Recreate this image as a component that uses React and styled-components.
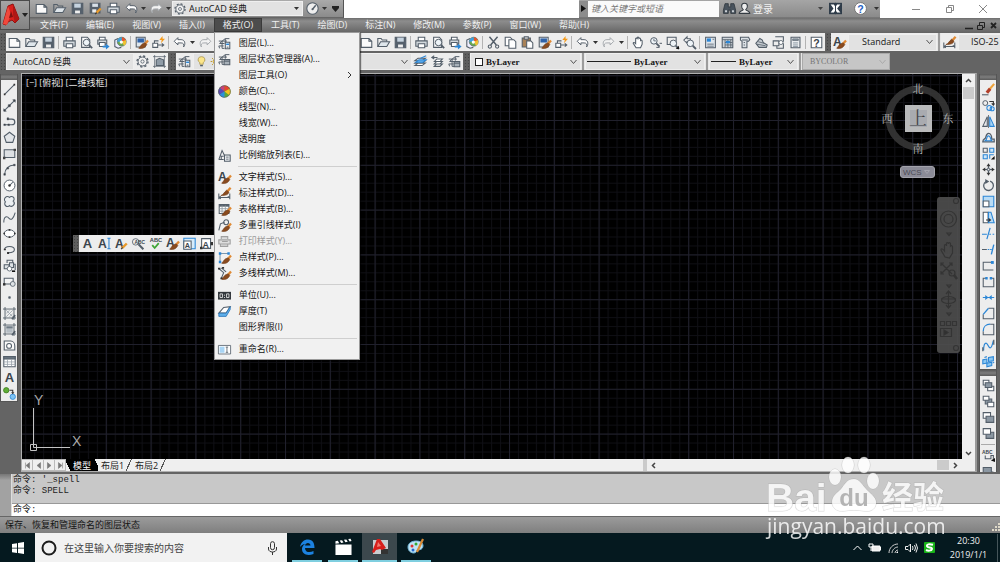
import React from "react";
import styled, { createGlobalStyle, css } from "styled-components";

const GlobalStyle = createGlobalStyle`
  * { box-sizing: border-box; }
  body { margin: 0; background: #646464; overflow: hidden; }
  body, button, input, select { font-family: "Open Sans", "Noto Sans CJK SC", sans-serif; font-size: 9px; line-height: 12px; }
  button { border: 0; padding: 0; margin: 0; background: none; color: inherit; }
  svg { display: block; flex: none; overflow: visible; }
`;

const INK = "#535e69";
const BLUE = "#2b86d6";

/* ---------- icon drawings, 16 x 16 ---------- */

const P = ({ d, s = INK, f = "none", w = 1.3 }) => <path d={d} stroke={s} fill={f} strokeWidth={w} />;
const Letter = ({ x = 0, y = 13, size = 15, fill = "#3b444c", weight = 700, children }) => (
  <text x={x} y={y} fontSize={size} fontFamily="Liberation Sans, sans-serif" fontWeight={weight} fill={fill}>{children}</text>
);
const Brush = () => (
  <>
    <P d="M16 5.500L12 10" s="#e08a34" w={2.800} />
    <P d="M12.500 8.500l2 2c-2 4-5 5.500-10 4.500c2-1.500 2.500-4 5-5.500z" f="#8a4b1f" s="#6e3a17" w={0.800} />
  </>
);
const Pencil = () => <><P d="M14.500 8L9 13.500" s="#e79a2c" w={3} /><P d="M9.500 13L7.500 15" s="#333" w={1.500} /></>;
const Stack = () => (
  <P d="M5 5l4-3h5M2 8l3-3h6M1 5h4M2 8h6M1 11h6M2 14l-1-3M5 5v9h3M9 2v5" w={1.200} />
);
const Lens = ({ x = 6, y = 6 }) => <><circle cx={x} cy={y} r="4" fill="#eef4f8" stroke={INK} strokeWidth="1.2" /><P d={`M${x + 3} ${y + 3}l4 4`} w={2.200} /></>;

const drawings = {
  new: <P d="M1.500 3h9.500l3.500 3.500V14h-13zM11 3v3.500h3.500" f="#fafafa" />,
  open: <><P d="M1 13V3h4l1.500 2H12v2" /><P d="M1 13l3.500-6H15.500l-3.500 6z" f="#dfe6eb" /></>,
  save: <><P d="M1.500 1.500h13v13h-13z" f="#55606c" /><P d="M4 2h8v5H4z" f="#c6d3df" s="none" /><P d="M5 10.500h6V14H5z" f="#eee" s="none" /></>,
  saveas: <><P d="M1.500 1.500h12v12h-12z" f="#55606c" /><P d="M4 2h7v4H4z" f="#d8e0e8" s="none" /><P d="M4 9h5v4H4z" f="#eee" s="none" /><Pencil /></>,
  print: <><P d="M4 6V1.500h8V6" f="#fff" /><P d="M1 6h14v6.500H1z" f="#d2d8dd" /><P d="M4 9.500h8v5H4z" f="#fff" /></>,
  preview: <><P d="M2 14V1.500h7L12 5v9z" f="#fafafa" /><Lens x={8} y={8} /></>,
  publish: <><P d="M3 5V1.500h7V5" f="#fff" /><P d="M1 5h11v5H1z" f="#d2d8dd" /><P d="M3 8h7v5H3z" f="#fff" /><P d="M7 12h4v-2.500l4.500 3.500-4.500 3.500V14H7z" f={BLUE} s="none" /></>,
  sphere: <><P d="M5 3L1 5v8l4 2 4-1" f="#eef" /><circle cx="9.500" cy="7" r="5.500" fill="#6aa84f" stroke={INK} strokeWidth=".8" /><P d="M9.500 7V1.500a5.500 5.500 0 0 1 5 4z" f="#e6542e" s="none" /><P d="M9.500 7l5-2a6 6 0 0 1-2 7z" f="#f2c230" s="none" /><P d="M9.500 7L4 7a6 6 0 0 1 5.500-5.500z" f="#3f9fe0" s="none" /><circle cx="9" cy="7.500" r="2" fill="#fff" /></>,
  match: <><P d="M1.500 1.500h11v12h-11z" f="#dfe6ec" /><P d="M3 3h8v5H3z" f="#2f62a8" s="none" /><Brush /></>,
  block: <><P d="M1 9h6v5H1zM3 9V6h5" f="#fff" /><P d="M7 11h7M12 9l2.500 2L12 13" /><P d="M13 0L9 5h3l-1 4 5-5.500h-3z" f="#f49a1a" s="none" /></>,
  undo: <P d="M6 2L1.500 6.500 6 11V8.500h4c3 0 4 2 3 5 3-4 1.500-9-3-9H6z" f="#fff" w={1.200} />,
  redo: <P d="M10 2l4.500 4.500L10 11V8.500H6c-3 0-4 2-3 5-3-4-1.500-9 3-9h4z" f="#f3f3f3" s="#a3a8ac" w={1.200} />,
  cut: <><P d="M3 1l8.500 10M13 1L4.500 11" w={1.800} /><circle cx="3.500" cy="13" r="2" fill="none" stroke={INK} strokeWidth="1.3" /><circle cx="12.500" cy="13" r="2" fill="none" stroke={INK} strokeWidth="1.3" /></>,
  copy: <><P d="M1.500 1.500h6L10 4v8H1.500z" f="#fff" /><P d="M6 4.500h6l2.500 2.500v8H6z" f="#fff" /></>,
  paste: <><P d="M1.500 2.500h10v11h-10z" f="#a98257" /><P d="M4 1h5v3H4z" f="#ccc" /><P d="M7 6h5l2.500 2.500V15H7z" f="#fff" /></>,
  pan: <P d="M5 14.500L1.500 9c0-1.500 1.500-1 3 .5V3c1-1 2 0 2 1V1.800c1-1 2 0 2 1V3c1-1 2 0 2 1v1.500c1-1 2 0 2 1V10l-2 4.500z" f="#fff" />,
  zoomrt: <><Lens x={6} y={6} /><P d="M6 3.500V6h2.500" w={1} /><P d="M9 14h4M13 9h3" w={1.200} /></>,
  zoomwin: <><P d="M1.500 1.500h11v9h-11z" /><Lens x={9} y={9} /><P d="M16 12v4h-4z" f="#111" s="none" /></>,
  zoomprev: <><P d="M1 5l4-4v2.500h4v3H5V9z" f="#fff" /><Lens x={9} y={9} /></>,
  palette: <><P d="M2 1.500h12v13H2z" f="#dfe6ec" /><P d="M3.500 3h5v4h-5z" f={BLUE} s="none" /><P d="M4 10h8M4 12.500h8M10.500 4h2" w={1} /></>,
  center: <><P d="M1.500 1.500h13v13h-13z" f="#cfd5da" /><P d="M1.500 4.500h13M5 4.500v10M8.500 4.500v10M12 4.500v10M5 8h9M5 11h9" w={1} /><P d="M6 6h5v3H6z" f={BLUE} s="none" /></>,
  toolpal: <><P d="M3 1.500h10l1.500 3-1.500 2-2 0v8H5v-8L3 5z" f="#dce1e5" /><P d="M5 5h7M7 8h1.500M7 11h1.500" /></>,
  sheets: <><P d="M1 9l5-6 3 2 1 3 5 3-1 3-9 0z" f="#c8ced3" /><P d="M2 10l11 2M4 7l7 2" w={1} /></>,
  markup: <><P d="M4 1h10v6M1.500 6h7v6h-7zM6 12v3h8V9" /><circle cx="11" cy="8" r="2.500" fill="#fff" stroke={INK} /></>,
  calc: <><P d="M2.500 1.500h11v13h-11z" f="#e8ebee" /><P d="M4.500 3.500h7v2h-7z" f="#8c98a3" w={0.800} /><P d="M5 8.500h6M5 11h6M5 13h6" s="#8c98a3" w={1.200} /></>,
  help: <><P d="M1.500 1.500h13v13h-13z" f="#fff" /><Letter x={4} y={13} size={13}>?</Letter></>,
  gear: <><circle cx="8" cy="8" r="5.500" fill="#f2f2f2" stroke={INK} strokeWidth="1.2" /><circle cx="8" cy="8" r="6.800" fill="none" stroke={INK} strokeWidth="1.6" strokeDasharray="2.670" /><circle cx="8" cy="8" r="2" fill="none" stroke={INK} /></>,
  custom: <><P d="M2 0v16M0 2h16M14 0v16M0 14h16" w={0.900} /><P d="M4 6l4-2 5 2v7H4z" f="#8f9ba6" /></>,
  gauge: <><circle cx="8" cy="8" r="7" fill="#eee" stroke={INK} strokeWidth="1.3" /><P d="M8 9l4-5" w={1.800} /><circle cx="8" cy="9" r="1.300" fill={INK} /></>,
  layers: <><Stack /><P d="M9 6.500h5.500v8H9z" f="#fff" /><P d="M10 8h3.500v2H10z" f={BLUE} s="none" /><P d="M10.500 12.500h2.500" /></>,
  layerstate: <><Stack /><P d="M7.500 8h7v6.500h-7z" f="#a8b1b9" /><P d="M7.500 10h7" /></>,
  layerblue: <><P d="M1 13l4-3h9l-4 3zM1 10l4-3h9l-4 3zM1 7l4-3h9l-4 3z" f="#fff" /><P d="M2 9l4-3h9l-4 3z" f="#66b2ef" s={BLUE} /><P d="M8 4l7-3" s={BLUE} /></>,
  layerprev: <><P d="M4 14l3-3h7l-3 3zM4 11l3-3h7l-3 3zM4 8l3-3h7l-3 3z" f="#fff" /><P d="M4 1L1 3l3 2M1 3h7" /></>,
  bulb: <><P d="M8 1a4.500 4.500 0 0 0-2.500 8.500V12h5V9.500A4.500 4.500 0 0 0 8 1z" f="#fbe58a" s="#a08a40" w={1} /><P d="M6 14h4" w={2} /></>,
  sun: <><circle cx="8" cy="8" r="3.500" fill="#fbd75e" stroke="#b78f1c" /><P d="M8 1v2M8 13v2M1 8h2M13 8h2M3 3l1.500 1.500M13 13l-1.500-1.500M13 3l-1.500 1.500M3 13l1.500-1.500" s="#b78f1c" /></>,
  abrush: <><Letter y={12} size={15}>A</Letter><Brush /></>,
  dimbrush: <><P d="M1 8v7M14.500 8v7M1 13h13.500M1 13l2.500-1.500M1 13l2.500 1.500M14.500 13L12 11.500" /><P d="M15.500 1L11 6" s="#e08a34" w={2.800} /><P d="M10.500 4l3 2.500c-1 3-4 4-10 4 3-1 4-4 7-6.500z" f="#8a4b1f" s="#6e3a17" w={0.800} /></>,
  wheel: <><circle cx="8" cy="8" r="7.500" fill="#58a83c" /><P d="M8 8L2 3.500A7.500 7.500 0 0 1 8 .5z" f="#c8407b" s="none" /><P d="M8 8V.5a7.500 7.500 0 0 1 6.500 4z" f="#e8452c" s="none" /><P d="M8 8l6.500-3.500a7.500 7.500 0 0 1-.5 8z" f="#f6c21d" s="none" /><P d="M8 8L2 3.500A7.500 7.500 0 0 0 1.500 12z" f="#5a48b8" s="none" /><P d="M8 8l-6.500 4A7.500 7.500 0 0 0 8 15.500z" f="#2b8fe0" s="none" /><circle cx="8" cy="8" r="7.200" fill="none" stroke="#5c5c5c" strokeWidth=".8" /></>,
  scale: <><P d="M1 13L5 2l3 6M1 13h6M4 13V9h3" /><P d="M8 7.500h7v7.500H8z" f="#e8ecef" /><P d="M10 10h3M10 12.500h3" w={1} /></>,
  tablebrush: <><P d="M1.500 2h12v11h-12z" f="#fff" /><P d="M1.500 3.500h12" w={2} /><P d="M1.500 7h12M1.500 10h11M5 3v10M9 3v10" s="#8d979f" w={1} /><Brush /></>,
  leaderbrush: <><P d="M1 14L3 6l5-2" /><circle cx="10" cy="4" r="3" fill="none" stroke={INK} strokeWidth="1.3" /><Brush /></>,
  plotstyle: <P d="M4 5V2h8v3M1 6h14v5H1zM3 11v3h9v-3M5 8h7" s="#a0a0a0" f="#ddd" />,
  pointbrush: <><P d="M2.500 3h10M2.500 3v10" s="#7c97ad" /><P d="M1 1.500h3v3H1zM11.500 1.500h3v3h-3zM1 12h3v3H1z" f={BLUE} s="none" /><Brush /></>,
  mlinebrush: <><P d="M1 2l6 5-3 7M4 1l6 5" /><P d="M0 1h3v2H0zM5 0h2.500v2H5zM3 13h3v2H3z" f="#333" s="none" /><Brush /></>,
  units: <><P d="M0 3.500h16v9.500H0z" f="#33383d" s="none" /><P d="M2.500 6h3v4.500h-3zM10.500 6h3v4.500h-3z" s="#eee" w={1} /><P d="M8 7v1M8 10v1" s="#fff" /></>,
  thick: <><P d="M1 10l6-7 8-1-5 8z" f="#fff" /><P d="M1 10l9 0 5-8v3.500l-5 8.500H1z" f="#5eb0ec" s="#2974b8" w={1} /></>,
  rename: <><P d="M.5 3h15v10.500H.5z" f="#fff" w={1} /><P d="M2 4.500h6V12H2z" f="#a9d5f5" s="none" /><P d="M9.500 5h3M11 5v6.500M9.500 11.500h3" w={1} /></>,
  line: <><P d="M2 14L14 2" /><P d="M1 13h2v2H1zM13 1h2v2h-2z" f="#333" s="none" /></>,
  xline: <><P d="M1 15L15 1" /><P d="M6.500 7h2.500v2.500H6.500zM12 1h3v3zM1 12v3h3z" f="#333" w={0.800} /></>,
  pline: <><P d="M2 12h9a3 3 0 0 0 0-7H6" w={1.500} /><P d="M1 11h2v2H1zM6 11h2v2H6zM5 3.500h2v2.500H5z" f="#333" w={0.600} /></>,
  polygon: <P d="M8 1.500l6.500 5L12 14H4L1.500 6.500z" f="#e2e5e8" />,
  rect: <><P d="M1.500 3.500h13v9.500h-13z" f="#dde0e3" /><P d="M0 12h3v3H0zM13 2h3v3h-3z" f="#444" s="none" /></>,
  arc: <><P d="M2 14C2.500 8 6 3 14 2.500" /><P d="M1 13h2v2H1zM5 5.500h2v2H5zM13 1.500h2v2h-2z" f="#333" w={0.600} /></>,
  circle: <><circle cx="8" cy="8" r="6.700" fill="#fff" stroke={INK} strokeWidth="1.2" /><P d="M8 8l4-4" /><circle cx="8" cy="8" r="1.500" fill="#333" /></>,
  cloud: <P d="M8 3a3.200 3.200 0 1 1 4.500 4.500A3.200 3.200 0 1 1 8 13a3.200 3.200 0 1 1-5-4.500A3.200 3.200 0 1 1 8 3z" f="#eceff1" />,
  spline: <P d="M1 14c0-8 4-8 6.500-5S13 9 15 2" />,
  ellipse: <><ellipse cx="8" cy="8" rx="6.500" ry="4.500" fill="#fff" stroke={INK} strokeWidth="1.2" /><P d="M0.500 7h2v2h-2zM13.500 7h2v2h-2zM7 11.500h2v2H7zM7 2.500h2v2H7z" f="#333" s="none" /></>,
  earc: <><P d="M2 8c0-5 12-5 12 0 0 4-4 4-7 4" /><P d="M1 7h2.500v2H1zM5 11h2.500v2.500H5z" f="#333" s="none" /></>,
  insblock: <><P d="M5 5V1.500h7v5h3v7" /><P d="M1.500 7h6v5h-6zM8 4.500h5v6H8z" f="#dfe3e6" /><circle cx="8" cy="12" r="2.800" fill="#fff" stroke={INK} /><P d="M11 14h4v2h-4z" f="#111" s="none" /></>,
  mkblock: <><P d="M1.500 4h11v7h-11z" f="#f4f4f4" /><circle cx="12" cy="11" r="3" fill="#dfe3e6" stroke={INK} /><P d="M0 10h3v3H0z" f="#333" s="none" /></>,
  point: <P d="M7 7h2v2H7z" f={INK} w={0.800} />,
  hatch: <><P d="M2.500 0v16M0 2.500h16M13.500 0v16M0 13.500h16" w={1.100} /><P d="M4 8l4-4M4 12l8-8M8 12l4-4M4 4l8 8" s="#929ba3" w={0.900} /><P d="M11 15l4-5" w={2} /></>,
  gradient: <><P d="M2.500 0v16M0 2.500h16M13.500 0v16M0 13.500h16" w={1.100} /><P d="M4 4h8v3H4z" f="#6e7a85" s="none" /><P d="M4 7h8v5H4z" f="#b4bcc3" s="none" /><P d="M11 15l4-5" w={2} /></>,
  region: <><P d="M1.500 2.500h8c3 0 5 3 5 6v5h-13z" f="#fafafa" /><circle cx="7.500" cy="8.500" r="3" fill="#fff" stroke={INK} strokeWidth="1.3" /></>,
  table: <><P d="M1 2h14v12.500H1z" f="#fff" /><P d="M1 2h14v3H1z" f="#707c87" /><P d="M1 8.500h14M1 11.500h14M5.500 5v9M10.500 5v9" s="#9aa3ab" w={1} /></>,
  mtext: <Letter x={2} y={14} size={16}>A</Letter>,
  addsel: <><circle cx="4" cy="4" r="3.300" fill="#5fae35" stroke="#3d7d1f" /><circle cx="12" cy="12" r="3.300" fill="#7fc4f5" stroke={BLUE} /><P d="M8 4h4v4" s="#333" /><P d="M10 6.500h4l-2 2.500z" f="#333" s="none" /></>,
  textA: <Letter x={2} y={14} size={16}>A</Letter>,
  textAI: <><Letter x={0} y={14} size={15}>A</Letter><P d="M11.500 1.500h4M11.500 14.500h4M13.500 1.500v13" s={BLUE} /></>,
  textPen: <><Letter x={0} y={13} size={15}>A</Letter><Pencil /></>,
  textFind: <><circle cx="4.500" cy="6" r="4" fill="none" stroke={INK} /><Letter x={3} y={8} size={6}>ABC</Letter><P d="M8 9l6 6" w={2.500} /></>,
  textSpell: <><Letter x={1} y={6} size={7}>ABC</Letter><P d="M4 10l3 3.500L12 7.500" s="#3fa535" w={2.200} /></>,
  textScale: <><P d="M1 1.500h14v13H1z" f="#d6ebfa" s={BLUE} /><P d="M1 5h9v10H1z" f="#fff" /><Letter x={2} y={13} size={9}>A</Letter></>,
  textJust: <><P d="M2 2h11v12H2z" f="#fff" /><Letter x={3} y={13} size={11}>A</Letter><P d="M0 12h3v3H0zM13 6h3v4h-3z" f="#333" s="none" /></>,
  erase: <><P d="M15 1L9 8" s="#eda23a" w={2.500} /><P d="M10 7l-4 5" s="#b3402a" w={4} /><P d="M0 14.500h8" /></>,
  copyobj: <><circle cx="4" cy="5" r="3" fill="none" stroke={INK} strokeWidth="1.2" /><circle cx="9" cy="11" r="3" fill="none" stroke={BLUE} strokeWidth="1.3" /><circle cx="12.500" cy="12" r="2.500" fill="none" stroke={BLUE} strokeWidth="1.3" /><P d="M9 3h5v4M12 5.500l2 2 1.500-2" s="#333" /></>,
  mirror: <><P d="M6.500 2v12H1z" f="#e7e9eb" /><P d="M9.500 2v12H15z" f="#a7d3f5" s={BLUE} /><P d="M8 0v16" w={1} /></>,
  offset: <><P d="M1 13.500h14V10h-3c0-3-1-7-4-7S5 8 4 9 1 10 1 13.500z" s={INK} w={1.600} /><P d="M4 12h8c-2-2-1-6-4-6s-1 4-4 6z" s={BLUE} w={1.400} /></>,
  array: <><P d="M1.500 1.500h5v5h-5z" /><P d="M9.500 1.500h5v5h-5zM1.500 9.500h5v5h-5z" s={BLUE} f="#cfe6f8" /><P d="M9.500 14.500v-5h5" s={BLUE} /><P d="M15.500 11v4.500H11z" f="#111" s="none" /></>,
  move: <><P d="M8 1v14M1 8h14" w={1.400} /><P d="M5.500 4L8 .5 10.500 4zM5.500 12L8 15.500l2.500-3.500zM4 5.500L.5 8 4 10.500zM12 5.500L15.500 8 12 10.500z" f="#333" s="none" /><P d="M6.500 6.500h3v3h-3z" f="#eee" w={1} /></>,
  rotate: <><P d="M5 3a6 6 0 1 0 5-.5" w={1.600} /><P d="M4 0l5 3-5 3z" f={INK} s="none" /></>,
  scaleobj: <><P d="M1.500 1.500h13v13h-13z" f="#b9dcf6" s={BLUE} /><P d="M1.500 7.500h7v7h-7z" f="#fff" /></>,
  stretch: <><P d="M1.500 1.500h6v13h-6z" f="#fff" /><P d="M8 1.500h3l4 13H8z" f="#b9dcf6" s={BLUE} /><P d="M5 11h5M8 9l2.500 2L8 13" s="#333" /></>,
  trim: <><P d="M10 1L6 15" s={BLUE} w={1.500} /><P d="M0 9h6M9 9h2M13 9h2" s={BLUE} /></>,
  extend: <><P d="M14.500 2l-3 12" s={BLUE} w={1.600} /><P d="M0 8h6" /><P d="M7 8h2M10 8h2" s={BLUE} /></>,
  breakpt: <><P d="M14 13.500H1.500V4h12" /><P d="M11 2.500h3.500v3.500H11z" f={BLUE} s="none" /></>,
  breakobj: <><P d="M5 4H1.500v10.500h13V4H11" /><P d="M4 2.500h3v3H4zM9.500 2.500h3v3h-3z" f={BLUE} s="none" /></>,
  join: <><P d="M1 8h14" s={BLUE} w={1.300} /><P d="M4 5l4 3-4 3zM12 5L8 8l4 3z" f={BLUE} s="none" /></>,
  chamfer: <><P d="M8 1.500h6.500v13h-13V9" /><P d="M1.500 9L8 1.500" s={BLUE} w={1.600} /></>,
  fillet: <><P d="M10 1.500h4.500v13h-13V10" /><P d="M1.500 10C1.500 5 5 1.500 10 1.500" s={BLUE} w={1.600} /></>,
  blend: <><P d="M2 14c0-6 1-9 3-9s3 6 5 6 3-5 4-9" s={BLUE} w={1.500} /><P d="M1 10v5M14.500 1v6" w={1.500} /></>,
  explode: <><P d="M1 6l5-1v5l-5 1zM8 3l6-1v5l-6 1zM6 10l6-1v4l-6 1.500z" f="#8bc7f2" s={BLUE} /><P d="M3 3l3-1M13 10l2-1" s={BLUE} /></>,
  ordA: <><P d="M1.500 1.500h7v6h-7zM7 9h7.500v5.500H7z" f="#fff" /><P d="M4 4.500h8v6H4z" f="#8b97a2" /></>,
  ordB: <><P d="M4 5h8v6H4z" f="#8b97a2" /><P d="M1.500 1.500h7v5h-7zM7 9h7.500v5.500H7z" f="#fff" /></>,
  ordC: <><P d="M1.500 2h9v7h-9z" f="#fff" /><P d="M5 6.500h9.500v7.500H5z" f="#8b97a2" /></>,
  ordD: <><P d="M5 6.500h9.500v7.500H5z" f="#8b97a2" /><P d="M1.500 2h9v7h-9z" f="#fff" /></>,
  ordText: <><Letter x={0} y={6} size={6}>ABC</Letter><P d="M4 8v4h7V8h3v5" /><P d="M11 14l5 2v-5z" f="#111" s="none" /></>,
  ordHatch: <><P d="M1.500 3h10v11h-10z" f="#8b97a2" /><P d="M13 8v7" w={2} /></>,
  binoc: <><P d="M2.500 2h4v4h3V2h4l2 8v4H9.500v-4h-3v4H.5v-4z" f="#49535d" s="#2f363d" w={1} /><P d="M2.500 10h2.500v2.500H2.500zM11 10h2.500v2.500H11z" f="#c9ced3" s="none" /></>,
  person: <P d="M8 1.500c5 0 4 6 1.500 8 0 1 5 1 5 4.500h-13c0-3.500 5-3.500 5-4.500C4 7.500 3 1.500 8 1.500z" f="#eee" s="#343b42" />,
  exchange: <><P d="M0 1h16v14H0z" f="#2f3c49" s="none" /><P d="M2 3h4l2 3 2-3h4l-4 5 4 5h-4L8 10l-2 3H2l3.500-5z" f="#fff" s="none" /><P d="M8 1v14" s="#2f3c49" /></>,
  helpblue: <><circle cx="8" cy="8" r="7.300" fill="#fff" stroke="#666" /><Letter x={4} y={13} size={13} fill="#1f5fc4">?</Letter></>,
};

const Icon = ({ name, size = 13 }) => (
  <svg width={size} height={size} viewBox="0 0 16 16" fill="none" aria-hidden="true">{drawings[name]}</svg>
);

/* ---------- shell ---------- */

const Shell = styled.div`
  display: flex;
  flex-direction: column;
  height: 100vh;
  background: #646464;
  color: #1c1c1c;
`;

/* ---------- header ---------- */

const Header = styled.header`
  display: flex;
  flex: none;
  background: linear-gradient(#8a8a8a, #6b6b6b);
`;
const AppButton = styled.button`
  flex: none;
  display: flex;
  align-items: center;
  justify-content: center;
  gap: 1px;
  width: 30px;
  height: 30px;
  background: linear-gradient(#a5a5a5, #828282);
  border: 1px solid #4b4b4b;
`;
const HeaderRows = styled.div`
  flex: 1;
  min-width: 0;
`;
const TitleBar = styled.div`
  display: flex;
  height: 18px;
  background: #fff;
`;
const QuickAccess = styled.div`
  display: flex;
  align-items: center;
  padding: 0 1px 0 2px;
  background: linear-gradient(#aaa, #8b8b8b);
  border-bottom: 1px solid #666;
  border-right: 1px solid #555;
`;
const TitleGap = styled.div`
  flex: 1;
`;
const InfoCenter = styled.div`
  display: flex;
  align-items: center;
  width: 301px;
  background: linear-gradient(#a5a5a5, #8b8b8b);
  border-bottom: 1px solid #777;
`;
const SearchInput = styled.input`
  width: 131px;
  height: 16px;
  padding: 0 3px;
  margin-right: 2px;
  border: 0;
  background: #fafafa;
  font-style: italic;
  &::placeholder { color: #777; opacity: 1; }
`;
const SignIn = styled.button`
  flex: 1;
  display: flex;
  justify-content: space-between;
  align-items: center;
  gap: 2px;
  color: #f2f2f2;
  font-size: 10px;
`;
const Expand = styled.button`
  width: 9px;
  height: 16px;
  display: flex;
  align-items: center;
  justify-content: center;
  background: #8c8c8c;
`;
const WindowControls = styled.div`
  display: flex;
  width: 120px;
  padding-left: 19px;
`;
const WindowButton = styled.button`
  flex: 1;
  display: flex;
  align-items: center;
  justify-content: center;
`;
const MenuBar = styled.nav`
  position: relative;
  display: flex;
  height: 15px;
  padding-left: 1px;
  background: linear-gradient(#6d6d6d, #8d8d8d 20%, #646464);
`;
const MenuTitle = styled.button`
  padding: 0 9px;
  height: 14px;
  line-height: 14px;
  color: #f0f0f0;
  ${(p) => p.$open && css`background: #4c4c4c; box-shadow: 0 0 0 1px #3a3a3a inset;`}
`;
const MenuAnchor = styled.div`
  position: relative;
`;
const DocControls = styled.div`
  display: flex;
  gap: 2px;
  align-items: center;
  margin-left: auto;
  padding-right: 2px;
`;
const DocButton = styled.button`
  width: 10px;
  display: flex;
  justify-content: center;
`;

const Dropdown = styled.ul`
  position: absolute;
  z-index: 5;
  top: 14px;
  left: 0;
  width: 146px;
  margin: 0;
  padding: 2px 0;
  list-style: none;
  background: #f1f1f1;
  border: 1px solid #9a9a9a;
  box-shadow: 1px 1px 1px rgba(0, 0, 0, 0.5);
`;
const DropdownButton = styled.button`
  display: flex;
  align-items: center;
  width: 100%;
  height: 16px;
  color: #141414;
  white-space: nowrap;
  &:disabled { color: #9b9b9b; }
`;
const DropdownIcon = styled.span`
  width: 21px;
  margin-left: 3px;
  display: flex;
`;
const Submark = styled.span`
  margin-left: auto;
  padding-right: 7px;
`;
const Divider = styled.li`
  height: 6px;
  padding: 3px 2px 0 23px;
  &::after { content: ""; display: block; height: 1px; background: #cfcfcf; }
`;

/* ---------- toolbars ---------- */

const ToolbarLine = styled.div`
  display: flex;
  flex: none;
  height: ${(p) => (p.$tall ? "18px" : "17px")};
  margin-top: ${(p) => (p.$gap ? "2px" : "0")};
  overflow: hidden;
`;
const Toolbar = styled.div`
  display: flex;
  flex: ${(p) => (p.$fill ? "1" : "none")};
  align-items: center;
  min-width: ${(p) => p.$min || 0}px;
  margin-right: ${(p) => p.$after || 0}px;
  background: #ededed;
`;
const Grip = styled.span`
  flex: none;
  align-self: stretch;
  width: ${(p) => p.$size || 5}px;
  background: radial-gradient(circle, #444 1px, transparent 1px) 0 0 / 3px 3px #5e5e5e;
`;
const ThinGrip = styled.span`
  flex: none;
  align-self: stretch;
  width: 4px;
  border: 1px solid #e6e6e6;
  border-width: 0 1px;
  background: #9c9c9c;
`;
const ToolButton = styled.button`
  flex: none;
  display: flex;
  align-items: center;
  justify-content: center;
  width: ${(p) => p.$w || 17}px;
  height: 16px;
`;
const ToolRule = styled.span`
  flex: none;
  width: 4px;
  height: 13px;
  border-left: 1px solid #b3b3b3;
  margin-left: 1px;
  margin-right: -1px;
`;
const CaretBox = styled.button`
  width: ${(p) => p.$w || 9}px;
  display: flex;
  justify-content: center;
`;
const Combo = styled.label`
  flex: ${(p) => (p.$w ? "none" : "1")};
  display: flex;
  align-items: center;
  gap: 3px;
  width: ${(p) => (p.$w ? `${p.$w}px` : "auto")};
  height: ${(p) => p.$h || 17}px;
  padding: 0 3px 0 ${(p) => p.$pad ?? 4}px;
  background: ${(p) => (p.$off ? "#c6c6c6" : "#e2e2e2")};
  border: 1px solid ${(p) => (p.$off ? "#aaa" : "#efefef")};
`;
const ComboSelect = styled.select`
  flex: 1;
  min-width: 0;
  height: 14px;
  padding: 0;
  border: 0;
  background: none;
  appearance: none;
  color: #151515;
  font-family: ${(p) => (p.$serif ? '"Liberation Serif", serif' : "inherit")};
  font-weight: ${(p) => (p.$serif ? "700" : "400")};
  line-height: 14px;
  &:disabled { color: #757575; font-weight: 400; font-size: 8px; opacity: 1; }
`;
const Swatch = styled.span`
  width: 8px;
  height: 8px;
  background: #fff;
  border: 1px solid #222;
`;
const LineSample = styled.span`
  flex: none;
  width: ${(p) => p.$w}px;
  height: 1px;
  background: #222;
`;

const Chevron = ({ color = "#555" }) => (
  <svg width="7" height="6" viewBox="0 0 7 6" aria-hidden="true"><path d="M.5 1l3 3.500L6.500 1" fill="none" stroke={color} /></svg>
);
const Caret = ({ w, label, color = "#333" }) => (
  <CaretBox $w={w} aria-label={label}>
    <svg width="5" height="3" viewBox="0 0 5 3"><path d="M0 0h5L2.500 3z" fill={color} /></svg>
  </CaretBox>
);

const Tools = ({ items, width, size }) =>
  items.map((it, i) => {
    if (it === "|") return <ToolRule key={i} />;
    if (it === "v") return <Caret key={i} label="更多" w={width === 18 ? 7 : 9} />;
    return <ToolButton key={i} $w={width} aria-label={it}><Icon name={it} size={size} /></ToolButton>;
  });

const Picker = ({ label, value, w, h, pad, serif, off, children }) => (
  <Combo $w={w} $h={h} $pad={pad} $off={off}>
    {children}
    <ComboSelect aria-label={label} $serif={serif} disabled={off} defaultValue={value}>
      <option>{value}</option>
    </ComboSelect>
    <Chevron color={off ? "#aaa" : "#555"} />
  </Combo>
);

/* ---------- workspace ---------- */

const Workspace = styled.main`
  display: flex;
  flex: 1;
  min-height: 0;
  padding: 3px 3px 2px 0;
  background: #646464;
`;
const Dock = styled.aside`
  flex: none;
  width: 18px;
  padding-top: 1px;
  overflow: hidden;
`;
const DockBar = styled.div`
  display: flex;
  flex-direction: column;
  align-items: center;
  background: #ededed;
  border: solid #555;
  border-width: 0 1px 1px;
`;
const DockGrip = styled.span`
  align-self: stretch;
  height: 6px;
  margin-bottom: 1px;
  background: linear-gradient(#5a5a5a, #7d7d7d 50%, #5a5a5a);
`;
const DockRule = styled.span`
  width: 14px;
  height: 4px;
  border-bottom: 1px solid #aaa;
  margin-bottom: 2px;
`;
const DrawingFrame = styled.section`
  flex: 1;
  min-width: 0;
  display: flex;
  flex-direction: column;
  margin: 0 2px 0 3px;
  border: 1px solid #b0b0b0;
  border-right: 2px solid #9a9a9a;
`;
const DrawingRow = styled.div`
  display: flex;
  flex: 1;
  min-height: 0;
`;
const Canvas = styled.div`
  position: relative;
  flex: 1;
  min-width: 0;
  overflow: hidden;
  background: #000;
`;
const GridLayer = styled.svg`
  position: absolute;
  inset: 0;
  width: 100%;
  height: 100%;
`;
const ViewLabel = styled.div`
  position: absolute;
  top: 3px;
  left: 4px;
  color: #e4e4e4;
`;
const UcsMark = styled.svg`
  position: absolute;
  left: 7px;
  bottom: 5px;
`;
const ViewCube = styled.svg`
  position: absolute;
  top: 6px;
  right: 6px;
`;
const WcsButton = styled.button`
  position: absolute;
  top: 92px;
  right: 27px;
  display: flex;
  align-items: center;
  justify-content: space-between;
  width: 35px;
  height: 12px;
  padding: 0 4px 0 2px;
  border: 1px solid #a4a4ac;
  border-radius: 3px;
  background: #8b8b97;
  color: #4c4c56;
  font: 8px "Liberation Sans", sans-serif;
`;
const NavigationBar = styled.svg`
  position: absolute;
  top: 123px;
  right: 2px;
`;
const FloatingBar = styled.div`
  position: absolute;
  top: 161px;
  left: 51px;
  display: flex;
  align-items: center;
  height: 17px;
  background: #ededed;
`;
const VScroll = styled.div`
  flex: none;
  display: flex;
  flex-direction: column;
  width: 13px;
  background: #f0f0f0;
`;
const ScrollButton = styled.button`
  display: flex;
  align-items: center;
  justify-content: center;
  width: 13px;
  height: 12px;
`;
const VThumb = styled.span`
  width: 11px;
  height: 12px;
  margin: 1px;
  background: #cbcbcb;
`;
const TabsRow = styled.div`
  flex: none;
  display: flex;
  align-items: center;
  height: 12px;
  background: #efefef;
`;
const TabNav = styled.button`
  display: flex;
  align-items: center;
  justify-content: center;
  width: 11px;
  height: 12px;
  border: 1px solid #bbb;
  border-left: 0;
`;
const LayoutTab = styled.button`
  height: 12px;
  width: ${(p) => (p.$active ? "32px" : "34px")};
  line-height: 11px;
  text-align: ${(p) => (p.$active ? "center" : "left")};
  padding-left: ${(p) => (p.$active ? "0" : "3px")};
  color: ${(p) => (p.$active ? "#fff" : "#222")};
  background: ${(p) => (p.$active ? "linear-gradient(64deg, transparent 4px, #000 4px, #000 calc(100% - 3px), transparent 0)" : "linear-gradient(115deg, transparent calc(100% - 6px), #555 calc(100% - 6px), #555 calc(100% - 5px), transparent 0)")};
`;
const HScroll = styled.div`
  display: flex;
  align-items: center;
  width: 319px;
  margin-left: auto;
  margin-right: 13px;
  border-left: 4px solid #cbcbcb;
`;
const HThumb = styled.span`
  width: 12px;
  height: 10px;
  margin-left: auto;
  background: #cbcbcb;
`;

/* ---------- command line and status ---------- */

const CommandPane = styled.section`
  flex: none;
  display: flex;
  height: 43px;
  background: #c8c8c8;
  border-bottom: 1px solid #666;
  font-family: "Liberation Mono", "Noto Sans CJK SC", monospace;
`;
const CommandGrip = styled.div`
  flex: none;
  width: 12px;
  background: linear-gradient(#777, #999 5px, #a2a2a2 6px);
  border-right: 1px solid #ddd;
`;
const CommandBody = styled.div`
  flex: 1;
  display: flex;
  flex-direction: column;
`;
const History = styled.div`
  flex: 1;
  padding: 1px;
  line-height: 11px;
  white-space: pre;
  color: #222;
`;
const Prompt = styled.label`
  display: flex;
  align-items: center;
  height: 13px;
  padding-left: 1px;
  background: #fff;
  border-top: 1px solid #999;
`;
const PromptInput = styled.input`
  flex: 1;
  height: 11px;
  padding: 0 4px;
  border: 0;
  background: none;
  font-family: inherit;
`;
const StatusBar = styled.footer`
  flex: none;
  display: flex;
  justify-content: space-between;
  align-items: center;
  height: 16px;
  padding: 0 0 0 5px;
  background: linear-gradient(#9b9b9b, #7f7f7f);
  color: #141414;
`;

/* ---------- system taskbar ---------- */

const Taskbar = styled.div`
  flex: none;
  display: flex;
  height: 29px;
  background: #05191f;
  color: #f0f0f0;
`;
const StartButton = styled.button`
  width: 35px;
  display: flex;
  align-items: center;
  justify-content: center;
`;
const TaskSearch = styled.label`
  display: flex;
  align-items: center;
  width: 252px;
  padding: 0 10px 0 6px;
  background: #f2f2f2;
`;
const TaskSearchInput = styled.input`
  flex: 1;
  min-width: 0;
  padding: 0 0 0 7px;
  border: 0;
  background: none;
  font-size: 10px;
  &::placeholder { color: #444; opacity: 1; }
`;
const TaskApps = styled.div`
  display: flex;
  gap: 6px;
  padding-left: 5px;
`;
const TaskApp = styled.button`
  display: flex;
  align-items: center;
  justify-content: center;
  width: 30px;
  border-bottom: 2px solid #7fcfe0;
  ${(p) => p.$active && css`width: 35px; margin: 0 -2px; background: #3c484d;`}
`;
const Tray = styled.div`
  display: flex;
  align-items: center;
  gap: 4px;
  margin-left: auto;
`;
const TrayButton = styled.button`
  display: flex;
  align-items: center;
  justify-content: center;
  width: 14px;
`;
const Clock = styled.time`
  width: 58px;
  margin-right: 2px;
  line-height: 14px;
  text-align: center;
  border-right: 1px solid #45555a;
`;
const Watermark = styled.svg`
  position: fixed;
  z-index: 8;
  right: 50px;
  bottom: 17px;
  pointer-events: none;
`;

/* ---------- data ---------- */

const menus = ["文件(F)", "编辑(E)", "视图(V)", "插入(I)", "格式(O)", "工具(T)", "绘图(D)", "标注(N)", "修改(M)", "参数(P)", "窗口(W)", "帮助(H)"];
const formatMenu = [
  ["图层(L)...", "layers"], ["图层状态管理器(A)...", "layerstate"], ["图层工具(O)", null, "sub"], ["颜色(C)...", "wheel"],
  ["线型(N)..."], ["线宽(W)..."], ["透明度"], ["比例缩放列表(E)...", "scale"], null,
  ["文字样式(S)...", "abrush"], ["标注样式(D)...", "dimbrush"], ["表格样式(B)...", "tablebrush"], ["多重引线样式(I)", "leaderbrush"],
  ["打印样式(Y)...", "plotstyle", "off"], ["点样式(P)...", "pointbrush"], ["多线样式(M)...", "mlinebrush"], null,
  ["单位(U)...", "units"], ["厚度(T)", "thick"], ["图形界限(I)"], null,
  ["重命名(R)...", "rename"],
];
const drawTools = ["line", "xline", "pline", "polygon", "rect", "arc", "circle", "cloud", "spline", "ellipse", "earc", "insblock", "mkblock", "point", "hatch", "gradient", "region", "table", "mtext", "addsel"];
const modifyTools = ["erase", "copyobj", "mirror", "offset", "array", "move", "rotate", "scaleobj", "stretch", "trim", "extend", "breakpt", "breakobj", "join", "chamfer", "fillet", "blend", "explode"];
const navGlyphs = ["M2 1v10M9 1L3 6l6 5z", "M9 1L3 6l6 5z", "M2 1l6 5-6 5z", "M9 1v10M2 1l6 5-6 5z"];

const FormatMenu = () => (
  <Dropdown>
    {formatMenu.map((m, i) =>
      m ? (
        <li key={i}>
          <DropdownButton disabled={m[2] === "off"}>
            <DropdownIcon>{m[1] && <Icon name={m[1]} />}</DropdownIcon>
            {m[0]}
            {m[2] === "sub" && (
              <Submark><svg width="5" height="8" viewBox="0 0 5 8"><path d="M1 1l3 3-3 3" fill="none" stroke="#333" /></svg></Submark>
            )}
          </DropdownButton>
        </li>
      ) : <Divider key={i} />
    )}
  </Dropdown>
);

const AppHeader = () => (
  <Header>
    <AppButton aria-label="应用程序菜单">
      <svg width="19" height="24" viewBox="0 0 19 24">
        <path d="M1 21L6 3l5-2 6 15-4 4-3-3-4 2-2 3z" fill="#d9201c" stroke="#8f1210" />
        <path d="M1 21L6 3l3 8-4 11z" fill="#f0483c" />
        <path d="M9 8l2 6-4 1z" fill="#7d1210" /><path d="M11 1l6 15-4 4-2-8z" fill="#b01815" />
      </svg>
      <svg width="6" height="4" viewBox="0 0 6 4"><path d="M0 0h6L3 4z" fill="#222" /></svg>
    </AppButton>
    <HeaderRows>
      <TitleBar>
        <QuickAccess>
          <Tools width={18} items={["new", "open", "save", "saveas", "print", "undo", "v", "redo", "v"]} />
          <Combo $w={131} $h={15} $pad={1}>
            <Icon name="gear" size={12} />
            <ComboSelect aria-label="工作空间" defaultValue="AutoCAD 经典"><option>AutoCAD 经典</option></ComboSelect>
            <svg width="5" height="3" viewBox="0 0 5 3"><path d="M0 0h5L2.500 3z" fill="#333" /></svg>
          </Combo>
          <ToolButton $w={18} aria-label="性能"><Icon name="gauge" /></ToolButton>
          <Caret w={7} label="更多" />
          <CaretBox $w={14} aria-label="自定义"><svg width="7" height="6" viewBox="0 0 7 6"><path d="M0 0h7v2L3.500 6 0 2z" fill="#222" /></svg></CaretBox>
        </QuickAccess>
        <TitleGap />
        <InfoCenter>
          <Expand aria-label="展开搜索"><svg width="5" height="7" viewBox="0 0 5 7"><path d="M0 0l5 3.500L0 7z" fill="#111" /></svg></Expand>
          <SearchInput aria-label="搜索" placeholder="键入关键字或短语" />
          <ToolButton aria-label="搜索"><Icon name="binoc" /></ToolButton>
          <SignIn><Icon name="person" />登录<TitleGap /><svg width="5" height="3" viewBox="0 0 5 3"><path d="M0 0h5L2.500 3z" fill="#444" /></svg></SignIn>
          <ToolButton $w={24} aria-label="Exchange"><Icon name="exchange" /></ToolButton>
          <ToolButton $w={26} aria-label="帮助"><Icon name="helpblue" /></ToolButton>
          <Caret w={7} label="更多" />
        </InfoCenter>
        <WindowControls>
          <WindowButton aria-label="最小化"><svg width="8" height="8" viewBox="0 0 8 8"><path d="M0 4.500h8" stroke="#888" /></svg></WindowButton>
          <WindowButton aria-label="还原"><svg width="8" height="8" viewBox="0 0 8 8"><path d="M.5 2.500h5v5h-5zM2.500 2V.5h5v5H6" fill="none" stroke="#888" /></svg></WindowButton>
          <WindowButton aria-label="关闭"><svg width="8" height="8" viewBox="0 0 8 8"><path d="M0 0l8 8M8 0L0 8" stroke="#888" /></svg></WindowButton>
        </WindowControls>
      </TitleBar>
      <MenuBar>
        {menus.map((m) =>
          m === "格式(O)" ? (
            <MenuAnchor key={m}><MenuTitle $open>{m}</MenuTitle><FormatMenu /></MenuAnchor>
          ) : <MenuTitle key={m}>{m}</MenuTitle>
        )}
        <DocControls>
          <DocButton aria-label="最小化文档"><svg width="8" height="8" viewBox="0 0 8 8"><path d="M0 6.500h8" stroke="#222" strokeWidth="1.500" /></svg></DocButton>
          <DocButton aria-label="还原文档"><svg width="8" height="8" viewBox="0 0 8 8"><path d="M.5 3.500h5v4h-5zM2.500 3V.5h5v5H6" fill="none" stroke="#222" /></svg></DocButton>
          <DocButton aria-label="关闭文档"><svg width="7" height="7" viewBox="0 0 7 7"><path d="M1 1l5 5M6 1L1 6" stroke="#222" strokeWidth="1.800" /></svg></DocButton>
        </DocControls>
      </MenuBar>
    </HeaderRows>
  </Header>
);

const Toolbars = () => (
  <>
    <ToolbarLine $tall>
      <Toolbar $min={353}>
        <Grip $size={6} />
        <Tools items={["new", "open", "save", "|", "print", "preview", "publish", "sphere", "|", "match", "block", "|", "undo", "v", "redo", "v"]} />
      </Toolbar>
      <Toolbar $after={1}>
        <Grip />
        <Tools items={["new", "open", "save", "|", "print", "preview", "publish", "sphere", "|", "cut", "copy", "paste", "match", "block", "|", "undo", "v", "redo", "v", "|", "pan", "zoomrt", "zoomwin", "zoomprev", "|", "palette", "center", "toolpal", "sheets", "markup", "calc", "|", "help"]} />
      </Toolbar>
      <Toolbar $fill>
        <Grip />
        <ToolButton aria-label="文字样式"><Icon name="abrush" /></ToolButton>
        <Picker label="文字样式" value="Standard" w={89} pad={13} />
        <ThinGrip />
        <ToolButton aria-label="标注样式"><Icon name="dimbrush" /></ToolButton>
        <Combo $pad={12}><ComboSelect aria-label="标注样式" defaultValue="ISO-25"><option>ISO-25</option></ComboSelect></Combo>
      </Toolbar>
    </ToolbarLine>
    <ToolbarLine $gap>
      <Toolbar $after={2}>
        <Grip $size={6} />
        <Picker label="工作空间" value="AutoCAD 经典" w={128} pad={6} />
        <Tools items={["gear", "custom"]} width={17} />
      </Toolbar>
      <Toolbar $after={1}>
        <Grip $size={6} />
        <Tools items={["layers"]} />
        <Picker label="图层" value="0" w={219} pad={2}><Icon name="bulb" size={11} /><Icon name="sun" size={11} /></Picker>
        <Tools items={["layerblue", "layerprev", "layerstate"]} />
      </Toolbar>
      <Toolbar>
        <Grip $size={6} />
        <Picker label="颜色" value="ByLayer" w={111} serif><Swatch /></Picker>
        <ThinGrip />
        <Picker label="线型" value="ByLayer" w={120} pad={1} serif><LineSample $w={44} /></Picker>
        <ThinGrip />
        <Picker label="线宽" value="ByLayer" w={89} pad={1} serif><LineSample $w={25} /></Picker>
        <ThinGrip />
        <Picker label="打印样式" value="BYCOLOR" w={88} pad={7} serif off />
      </Toolbar>
    </ToolbarLine>
  </>
);

const Ucs = () => (
  <UcsMark width="60" height="62" viewBox="0 -4 60 62">
    <path d="M4.500 48V12M8 51.500h33M1.500 48.500h6v6h-6zM4.500 48v3.500H8" fill="none" stroke="#c4c4c4" />
    <text x="5" y="9" fontSize="14" fontFamily="Liberation Sans, sans-serif" fill="#a8a8a8">Y</text>
    <text x="43" y="50" fontSize="14" fontFamily="Liberation Sans, sans-serif" fill="#a8a8a8">X</text>
  </UcsMark>
);

const Cube = () => (
  <ViewCube width="76" height="78" viewBox="0 0 76 78" fontFamily="Noto Serif CJK SC, Noto Sans CJK SC, serif">
    <circle cx="38" cy="38" r="29" fill="none" stroke="#3a3a3a" strokeWidth="7" opacity=".85" />
    <rect x="25" y="25" width="27" height="27" fill="#b9babb" />
    <rect x="30" y="30" width="17" height="17" fill="#a9abb0" />
    <text x="38" y="45" fontSize="18" textAnchor="middle" fill="#3e4148">上</text>
    <g fontSize="11" textAnchor="middle" fill="#b9b9b9">
      <text x="38" y="13">北</text><text x="38" y="73">南</text><text x="7" y="43">西</text><text x="68" y="43">东</text>
    </g>
  </ViewCube>
);

const Navigation = () => (
  <NavigationBar width="23" height="156" viewBox="0 0 23 156">
    <rect width="23" height="156" rx="3" fill="#4f4f4f" opacity=".9" />
    <g fill="none" stroke="#343434" strokeWidth="1.200">
      <circle cx="19" cy="4" r="2.500" /><circle cx="11.500" cy="22" r="8" /><circle cx="11.500" cy="22" r="4.500" />
      <path d="M10 36h4l-2 2.500z" />
      <path d="M8 60l-4-7c0-2 2-1 3.500 1v-6c1-1 2 0 2 1v-3c1-1 2 0 2 1v-1c1-1 2 0 2 1v2c1-1 2 0 2 1v6l-3 5z" />
      <path d="M4 66l11 11M15 66L4 77M4 69v-3h3M12 66h3v3M4 74v3h3" /><circle cx="15" cy="76" r="3" /><path d="M17 78l3 4" strokeWidth="2.500" />
      <path d="M10 88h4l-2 2.500z" />
      <path d="M11.500 94v17M4 102h15M9 97l2.500-3 2.500 3M9 108l2.500 3 2.500-3" /><ellipse cx="11.500" cy="103" rx="7" ry="3.500" />
      <path d="M10 116h4l-2 2.500z" />
      <path d="M3.500 124.500h4v4h-4zM9.500 124.500h4v4h-4zM15.500 124.500h4v4h-4zM3.500 131.500h11v8h-11z" />
      <path d="M7 133v5l4-2.500z" fill="#303030" /><circle cx="19" cy="151" r="2.500" />
    </g>
  </NavigationBar>
);

const Drawing = () => (
  <DrawingFrame>
    <DrawingRow>
      <Canvas>
        <GridLayer>
          <defs>
            <pattern id="minor" x="39" y="46" width="8.960" height="8.960" patternUnits="userSpaceOnUse"><path d="M.5 0v9M0 .5h9" stroke="#0f0f14" /></pattern>
            <pattern id="major" x="39" y="46" width="44.800" height="44.800" patternUnits="userSpaceOnUse"><path d="M.5 0v45M0 .5h45" stroke="#20202c" /></pattern>
          </defs>
          <rect width="100%" height="100%" fill="url(#minor)" />
          <rect width="100%" height="100%" fill="url(#major)" />
        </GridLayer>
        <ViewLabel>[−] [俯视] [二维线框]</ViewLabel>
        <Ucs />
        <Cube />
        <WcsButton>WCS<svg width="6" height="4" viewBox="0 0 6 4"><path d="M.5.5h5L3 3.500z" fill="none" stroke="#a4a4ae" /></svg></WcsButton>
        <Navigation />
        <FloatingBar>
          <Grip $size={6} />
          <Tools items={["textA", "textAI", "textPen", "textFind", "textSpell", "abrush", "textScale", "textJust"]} />
        </FloatingBar>
      </Canvas>
      <VScroll>
        <ScrollButton aria-label="向上滚动"><svg width="7" height="5" viewBox="0 0 7 5"><path d="M1 4l2.500-2.500L6 4" fill="none" stroke="#444" strokeWidth="1.500" /></svg></ScrollButton>
        <VThumb />
        <TitleGap />
        <ScrollButton aria-label="向下滚动"><svg width="7" height="5" viewBox="0 0 7 5"><path d="M1 1l2.500 2.500L6 1" fill="none" stroke="#444" strokeWidth="1.500" /></svg></ScrollButton>
      </VScroll>
    </DrawingRow>
    <TabsRow>
      {navGlyphs.map((d, i) => (
        <TabNav key={i} aria-label={`标签导航 ${i + 1}`}><svg width="7" height="7" viewBox="0 0 11 12"><path d={d} fill="#777" stroke="#777" /></svg></TabNav>
      ))}
      <LayoutTab $active>模型</LayoutTab>
      <LayoutTab>布局1</LayoutTab>
      <LayoutTab>布局2</LayoutTab>
      <HScroll>
        <ScrollButton aria-label="向左滚动"><svg width="5" height="7" viewBox="0 0 5 7"><path d="M4 1L1.500 3.500 4 6" fill="none" stroke="#444" strokeWidth="1.500" /></svg></ScrollButton>
        <HThumb />
        <ScrollButton aria-label="向右滚动"><svg width="5" height="7" viewBox="0 0 5 7"><path d="M1 1l2.500 2.500L1 6" fill="none" stroke="#444" strokeWidth="1.500" /></svg></ScrollButton>
      </HScroll>
    </TabsRow>
  </DrawingFrame>
);

const System = () => (
  <Taskbar>
    <StartButton aria-label="开始">
      <svg width="12" height="12" viewBox="0 0 12 12"><path d="M0 2l5-.8v4.500H0zM6 1l6-1v5.700H6zM0 6.500h5V11l-5-.8zM6 6.500h6V12l-6-1z" fill="#fff" /></svg>
    </StartButton>
    <TaskSearch>
      <svg width="16" height="16" viewBox="0 0 16 16"><circle cx="8" cy="8" r="6.500" fill="none" stroke="#1c1c1c" strokeWidth="2" /></svg>
      <TaskSearchInput aria-label="搜索" placeholder="在这里输入你要搜索的内容" />
      <svg width="9" height="14" viewBox="0 0 9 14"><rect x="2.500" y=".7" width="4" height="8" rx="2" fill="none" stroke="#333" /><path d="M.5 6v2c0 4 8 4 8 0V6M4.500 11v3" fill="none" stroke="#333" /></svg>
    </TaskSearch>
    <TaskApps>
      <TaskApp aria-label="Edge"><svg width="16" height="16" viewBox="0 0 16 16"><path d="M1 8C2 3 5 .5 9 .5c5 0 6.500 4 6.500 8.500H6c0 4.500 5 5 8.500 3v3C8 17.500 3 15 3 10c0-2 1-4 3-5C4 5 2 6.500 1 8zm5-1.500h5.500C11.500 3 6.500 3 6 6.500z" fill="#1c82e0" /></svg></TaskApp>
      <TaskApp aria-label="电影"><svg width="17" height="17" viewBox="0 0 17 18"><path d="M0 7h17v11H0zM0 3.500l2.500-.5 1.500 2.500-4 .5zM4.500 2.700l2.500-.4 1.500 2.400-2.500.5zM9 1.900l2.500-.4L13 4l-2.500.5zM13.500 1.100l2.500-.4 1 2.500-2 .5z" fill="#fff" /></svg></TaskApp>
      <TaskApp $active aria-label="AutoCAD"><svg width="18" height="18" viewBox="0 0 18 18"><path d="M2 2h15v14H2z" fill="#c9cdd0" /><path d="M10 11h7v5h-7z" fill="#333" /><path d="M1 14L6 1h3l6 9-4 2-2-1-4 1-2 3z" fill="#d81f1b" /><path d="M7 4l3 4-4 1z" fill="#f4786f" /></svg></TaskApp>
      <TaskApp aria-label="画图"><svg width="18" height="17" viewBox="0 0 18 17"><path d="M9 3c5 0 7 2 7 5s-3 4-5 4-1 3-4 3-6-2-6-6 4-6 8-6z" fill="#bfe3f5" stroke="#6bb1d4" /><circle cx="5" cy="8" r="1.500" fill="#d33" /><circle cx="9" cy="6" r="1.500" fill="#3a3" /><circle cx="6" cy="12" r="1.500" fill="#26c" /><path d="M16 1l-6 13" stroke="#d98a35" strokeWidth="2.200" /></svg></TaskApp>
    </TaskApps>
    <Tray>
      <TrayButton aria-label="显示隐藏的图标"><svg width="9" height="6" viewBox="0 0 9 6"><path d="M.5 5l4-4 4 4" fill="none" stroke="#fff" /></svg></TrayButton>
      <TrayButton aria-label="电池"><svg width="12" height="9" viewBox="0 0 12 9"><path d="M3 3h8v5H3z" fill="#eee" stroke="#fff" /><path d="M0 1h4v3H0zM2 4v4M11.500 4v3" stroke="#fff" fill="none" /></svg></TrayButton>
      <TrayButton aria-label="网络"><svg width="10" height="10" viewBox="0 0 10 10"><path d="M1 10C1 5 5 1 10 1M4 10c0-3 3-6 6-6M7 10c0-1.500 1.500-3 3-3" fill="none" stroke="#ccc" /><path d="M8 10h2V8z" fill="#fff" /></svg></TrayButton>
      <TrayButton aria-label="音量"><svg width="13" height="10" viewBox="0 0 13 10"><path d="M.5 3.500H3L5.500 1v8L3 6.500H.5zM7.500 3q1 2 0 4M9.500 2q2 3 0 6M11 .5q3 4.500 0 9" fill="none" stroke="#eee" /></svg></TrayButton>
      <TrayButton aria-label="输入法"><svg width="11" height="11" viewBox="0 0 11 11"><rect width="11" height="11" rx="1" fill="#18b318" /><path d="M9 2.800C5 1.500 2.500 2.500 3 4.200S8.500 5 8 7 4 9 2 8" fill="none" stroke="#fff" strokeWidth="2" /></svg></TrayButton>
      <Clock>20:30<br />2019/1/1</Clock>
    </Tray>
  </Taskbar>
);

const BaiduMark = () => (
  <Watermark width="182" height="90" viewBox="768 455 182 90" fill="#fff" fillOpacity=".82" stroke="#8e8e8e" strokeOpacity=".35" paintOrder="stroke" aria-label="百度经验">
    <text x="766" y="511" fontSize="39" fontWeight="700" fontFamily="Liberation Sans, sans-serif">Bai</text>
    <ellipse cx="835" cy="477" rx="6" ry="8" /><ellipse cx="848" cy="465" rx="6" ry="8" />
    <ellipse cx="864" cy="465" rx="6" ry="8" /><ellipse cx="873" cy="481" rx="6" ry="8" />
    <path d="M854 479c6 0 8 6 13 11 5 5 10 8 9 14-1 6-6 8-12 7-6-1-14-1-20 0-7 1-12-3-12-9 0-6 5-9 9-13 4-5 6-10 13-10z" />
    <text x="854" y="506" fontSize="24" fontWeight="700" textAnchor="middle" fill="#b4b4b4" fillOpacity="1" stroke="none" fontFamily="Liberation Sans, sans-serif">du</text>
    <text x="882" y="508" fontSize="31" fontWeight="700" fontFamily="Noto Sans CJK SC, sans-serif">经验</text>
    <text x="767" y="534" fontSize="21" fontFamily="Open Sans, sans-serif" stroke="none">jingyan.baidu.com</text>
  </Watermark>
);

export default function App() {
  return (
    <Shell>
      <GlobalStyle />
      <AppHeader />
      <Toolbars />
      <Workspace>
        <Dock>
          <DockBar>
            <DockGrip />
            <Tools items={drawTools} width={16} />
          </DockBar>
        </Dock>
        <Drawing />
        <Dock>
          <DockBar>
            <DockGrip />
            <Tools items={modifyTools} width={16} />
          </DockBar>
          <DockBar>
            <DockGrip />
            <Tools items={["ordA", "ordB", "ordC", "ordD"]} width={16} />
            <DockRule />
            <Tools items={["ordText", "ordHatch"]} width={16} />
          </DockBar>
        </Dock>
      </Workspace>
      <CommandPane>
        <CommandGrip />
        <CommandBody>
          <History>{"命令: '_spell\n命令: SPELL"}</History>
          <Prompt>命令:<PromptInput aria-label="命令" /></Prompt>
        </CommandBody>
      </CommandPane>
      <StatusBar>
        保存、恢复和管理命名的图层状态
        <svg width="9" height="12" viewBox="0 0 9 12"><path d="M7 4h2v2H7zM4 7h2v2H4zM7 7h2v2H7zM1 10h2v2H1zM4 10h2v2H4zM7 10h2v2H7z" fill="#ddd8c8" /></svg>
      </StatusBar>
      <System />
      <BaiduMark />
    </Shell>
  );
}
